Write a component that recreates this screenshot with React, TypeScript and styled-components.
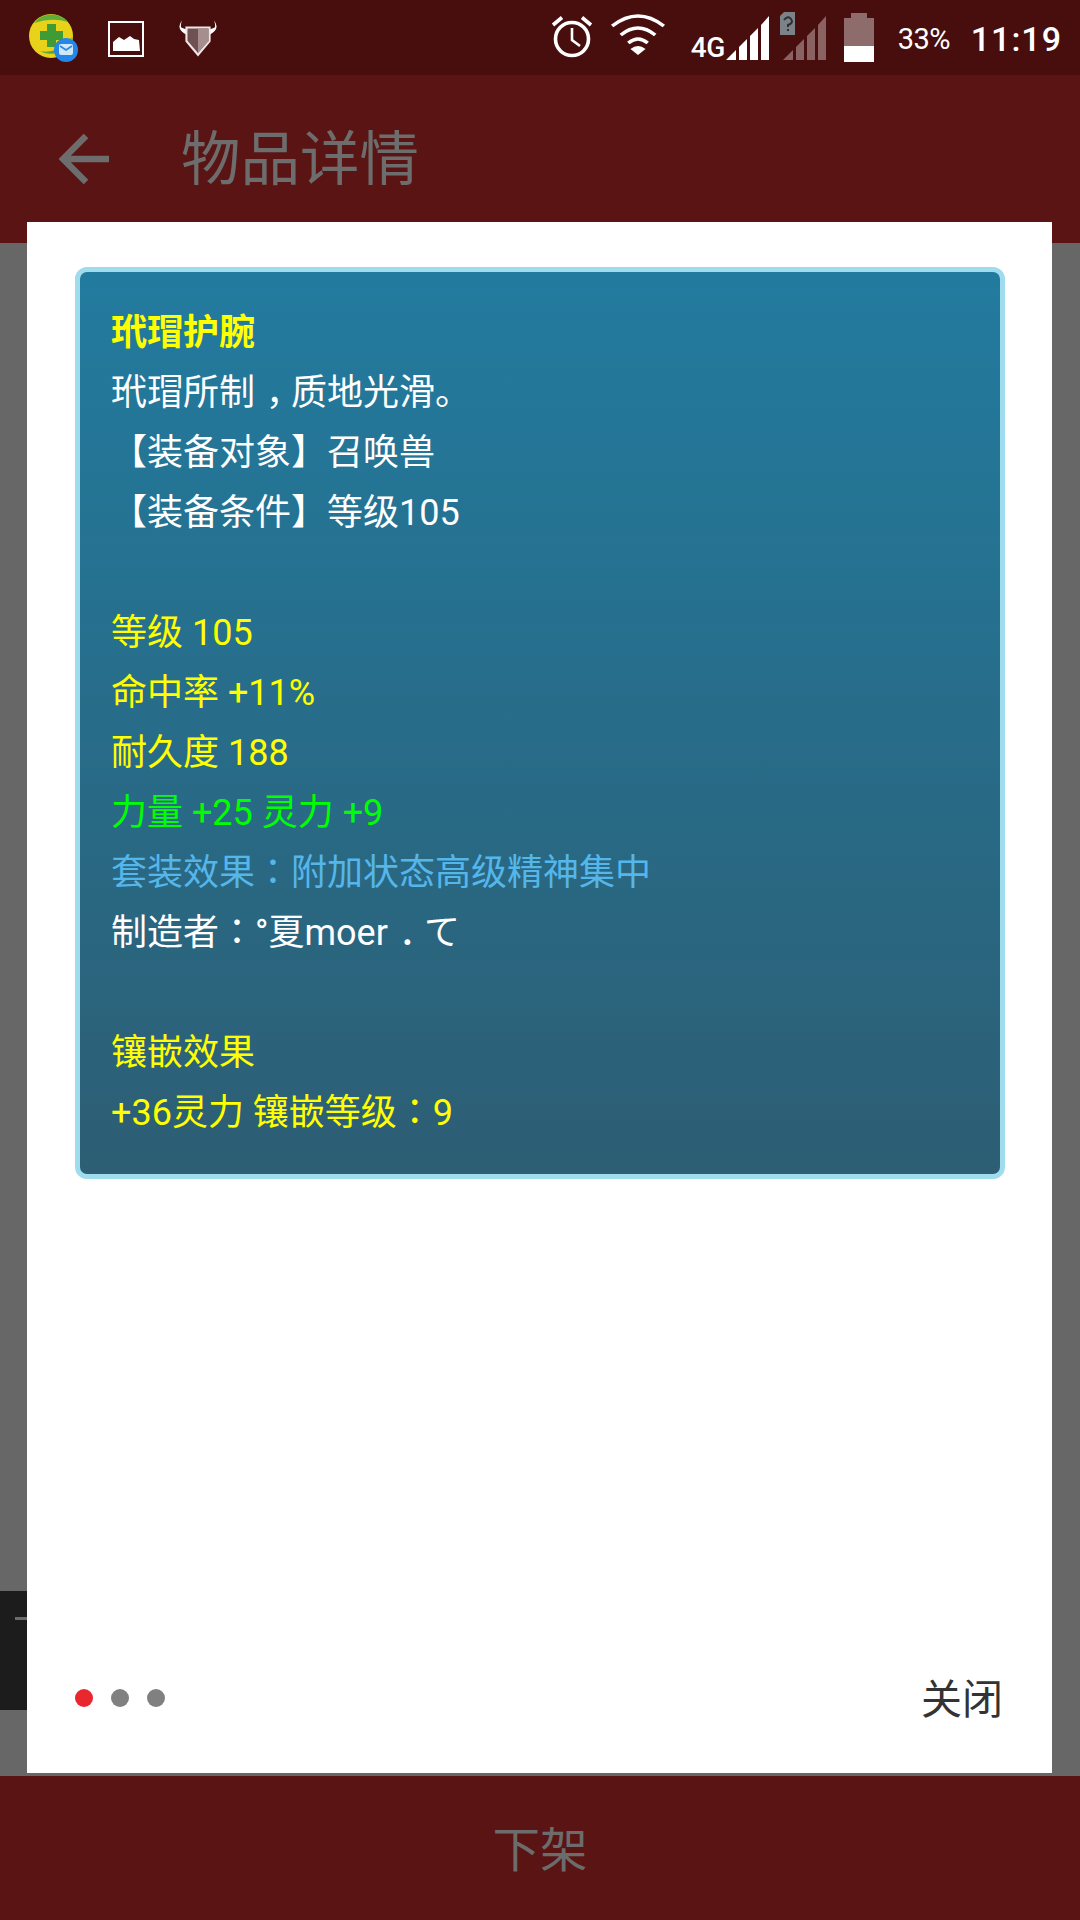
import React from "react";
import styled, { createGlobalStyle } from "styled-components";

const Global = createGlobalStyle`
  html, body { margin: 0; padding: 0; background: #676767; }
  * { box-sizing: border-box; }
`;
const FONT = `Roboto, "Noto Sans CJK SC", sans-serif`;

const Page = styled.div`
  position: relative;
  width: 1080px;
  height: 1920px;
  display: flex;
  flex-direction: column;
  font-family: ${FONT};
  overflow: hidden;
`;
const StatusBar = styled.div`
  height: 75px;
  background: #470e0d;
  display: flex;
  align-items: center;
  padding: 2px 18px 0 28px;
`;
const StatusLeft = styled.div`
  display: flex;
  align-items: center;
  gap: 28px;
  flex: 1;
`;
const StatusRight = styled.div`
  display: flex;
  align-items: center;
`;
const Battery = styled.span`
  font-size: 29px;
  color: #fff;
  margin-left: 24px;
  width: 53px;
  letter-spacing: -0.5px;
`;
const Clock = styled.span`
  font-size: 34px;
  font-weight: 500;
  color: #fff;
  margin-left: 20px;
  letter-spacing: 1px;
`;
const AppBar = styled.div`
  height: 168px;
  background: #5a1413;
  display: flex;
  align-items: center;
  padding: 0 0 0 59px;
  gap: 72px;
`;
const Title = styled.div`
  font-size: 59.5px;
  line-height: 1;
  padding-top: 4px;
  color: #6d6d6d;
`;
const Body = styled.div`
  flex: 1;
  background: #676767;
`;
const Toast = styled.div`
  position: absolute;
  left: 0;
  top: 1591px;
  width: 27px;
  height: 119px;
  background: #1c1c1c;
  &::after {
    content: "";
    position: absolute;
    left: 15px;
    right: 0;
    top: 26px;
    height: 3px;
    background: #6b6b6b;
  }
`;
const BottomBar = styled.div`
  height: 144px;
  background: #5a1413;
  display: flex;
  align-items: center;
  justify-content: center;
  font-size: 47.5px;
  line-height: 1;
  padding-top: 7px;
  color: #6c6c6c;
`;
const Dialog = styled.div`
  position: absolute;
  left: 27px;
  top: 222px;
  width: 1025px;
  height: 1551px;
  background: #fff;
  display: flex;
  flex-direction: column;
  padding: 45px 47px 0 48px;
`;
const Card = styled.div`
  border: 5px solid #9edcee;
  border-radius: 12px;
  background: linear-gradient(180deg, #227b9f 0%, #2d5e74 100%);
  padding: 31px 32px 31px 31px;
  font-size: 36px;
  line-height: 60px;
`;
const Line = styled.div<{ $c?: string; $b?: boolean }>`
  color: ${(p) => p.$c ?? "#fff"};
  font-weight: ${(p) => (p.$b ? 700 : 400)};
  height: 60px;
  white-space: pre;
`;
const Colon = styled.span`
  font-family: "Noto Sans CJK KR", sans-serif;
  line-height: 0;
`;
const Dotted = styled(Colon)`
  display: inline-block;
  padding-left: 0.3em;
  letter-spacing: -0.3em;
`;
const Footer = styled.div`
  margin-top: auto;
  height: 148px;
  display: flex;
  justify-content: space-between;
  align-items: flex-start;
`;
const Dots = styled.div`
  display: flex;
  gap: 18px;
  margin-top: 64px;
`;
const Dot = styled.span<{ $on?: boolean }>`
  width: 18px;
  height: 18px;
  border-radius: 50%;
  background: ${(p) => (p.$on ? "#e8272f" : "#808080")};
`;
const Close = styled.div`
  font-size: 41px;
  line-height: 60px;
  margin-top: 45px;
  color: #333;
  padding-right: 2px;
`;
const Icon = styled.svg<{ $ml?: number; $mb?: number }>`
  display: block;
  flex: none;
  margin-left: ${(p) => p.$ml ?? 0}px;
  margin-bottom: ${(p) => p.$mb ?? 0}px;
`;
const FourG = styled.span`
  font-size: 28px;
  font-weight: 500;
  color: #fff;
  margin: 18px 1px 0 25px;
  letter-spacing: -0.5px;
`;

const QQ = () => (
  <Icon width="52" height="52" viewBox="0 0 52 52">
    <circle cx="23" cy="23" r="22" fill="#e9d21a" />
    <path d="M6 10A22 22 0 0 1 40 9Q24 4 6 10Z" fill="#5fae3a" />
    <path d="M12 38Q28 42 44 24A22 22 0 0 1 12 38Z" fill="#58a53a" />
    <path d="M19 11h9v7h7v9h-7v7h-9v-7h-7v-9h7z" fill="#3f9b35" />
    <circle cx="38" cy="37" r="12" fill="#2486e6" />
    <rect x="31" y="31" width="14" height="11" rx="2" fill="#cfe6fb" />
    <path d="M32 33l6 4 6-4" fill="none" stroke="#2486e6" strokeWidth="1.6" />
  </Icon>
);
const Picture = () => (
  <Icon width="36" height="36" viewBox="0 0 36 36">
    <rect x="1" y="1" width="34" height="34" fill="none" stroke="#fff" strokeWidth="2" />
    <path d="M5 30V21l6-5 5 3 6-4 4 3 5 1 1 11z" fill="#fff" />
  </Icon>
);
const Shield = () => (
  <Icon $ml={5} $mb={2} width="42" height="38" viewBox="0 0 40 36">
    <path d="M5 1Q-2 9 9 15V10L4 8Q3 5 5 1ZM35 1Q42 9 31 15V10L36 8Q37 5 35 1Z" fill="#fff" />
    <path d="M9 8H31V21L20 34 9 21Z" fill="#6f5153" stroke="#f0e6e6" strokeWidth="2" />
    <path d="M20 9H30V21L20 32Z" fill="#a68d8e" />
  </Icon>
);
const Alarm = () => (
  <Icon $mb={6} width="42" height="44" viewBox="0 0 42 44">
    <circle cx="21" cy="25" r="16.5" fill="none" stroke="#fff" strokeWidth="3.6" />
    <path d="M21 14V26L29 32" fill="none" stroke="#fff" strokeWidth="2.6" />
    <path d="M2 11L11 3.5M40 11L31 3.5" stroke="#fff" strokeWidth="3.6" />
  </Icon>
);
const Wifi = () => (
  <Icon $ml={17} $mb={9} width="56" height="44" viewBox="0 0 52 44" preserveAspectRatio="none">
    <path d="M2 14Q26 -6 50 14M10 23Q26 9 42 23M17 31Q26 23 35 31" fill="none" stroke="#fff" strokeWidth="3.4" />
    <path d="M19 37Q26 31 33 37L26 43Z" fill="#fff" />
  </Icon>
);
const Signal = ({ dim }: { dim?: boolean }) => (
  <Icon $mb={4} width="44" height="46" viewBox="0 0 44 46">
    <g fill={dim ? "#8a6262" : "#fff"}>
      <path d="M0 46L10 36V46Z" />
      <path d="M13 33L21 25V46H13Z" />
      <path d="M24 22L32 14V46H24Z" />
      <path d="M35 11L43 2V46H35Z" />
    </g>
  </Icon>
);
const SimIcon = styled(Icon)`
  margin-bottom: 30px;
  margin-right: -13px;
`;
const Sim = () => (
  <SimIcon $ml={10} width="16" height="24" viewBox="0 0 16 24">
    <path d="M0 4L4 0H15V23H0Z" fill="#7d8288" />
    <path d="M4 8Q8 3 11 7T8 13V15M8 17V19" stroke="#2c2f33" strokeWidth="2" fill="none" />
  </SimIcon>
);
const Batt = () => (
  <Icon $ml={17} $mb={3} width="30" height="49" viewBox="0 0 30 49">
    <rect x="7" y="0" width="16" height="6" fill="#8f6c6c" />
    <rect x="0" y="5" width="30" height="28" fill="#8f6c6c" />
    <rect x="0" y="33" width="30" height="16" fill="#fff" />
  </Icon>
);
const Back = () => (
  <Icon width="50" height="50" viewBox="0 0 50 50">
    <path d="M50 25H4M27 2L4 25L27 48" fill="none" stroke="#6d6d6d" strokeWidth="6.5" />
  </Icon>
);

export default function App() {
  return (
    <Page>
      <Global />
      <StatusBar>
        <StatusLeft>
          <QQ />
          <Picture />
          <Shield />
        </StatusLeft>
        <StatusRight>
          <Alarm />
          <Wifi />
          <FourG>4G</FourG>
          <Signal />
          <Sim />
          <Signal dim />
          <Batt />
          <Battery>33%</Battery>
          <Clock>11:19</Clock>
        </StatusRight>
      </StatusBar>
      <AppBar>
        <Back />
        <Title>物品详情</Title>
      </AppBar>
      <Body />
      <BottomBar>下架</BottomBar>
      <Toast />
      <Dialog>
        <Card>
          <Line $c="#ffff00" $b>玳瑁护腕</Line>
          <Line>玳瑁所制<Dotted>，</Dotted>质地光滑。</Line>
          <Line>【装备对象】召唤兽</Line>
          <Line>【装备条件】等级105</Line>
          <Line> </Line>
          <Line $c="#ffff00">等级 105</Line>
          <Line $c="#ffff00">命中率 +11%</Line>
          <Line $c="#ffff00">耐久度 188</Line>
          <Line $c="#00ff00">力量 +25 灵力 +9</Line>
          <Line $c="#55b6ea">套装效果<Colon>：</Colon>附加状态高级精神集中</Line>
          <Line>制造者<Colon>：</Colon>°夏moer<Dotted>．</Dotted>て</Line>
          <Line> </Line>
          <Line $c="#ffff00">镶嵌效果</Line>
          <Line $c="#ffff00">+36灵力 镶嵌等级<Colon>：</Colon>9</Line>
        </Card>
        <Footer>
          <Dots>
            <Dot $on />
            <Dot />
            <Dot />
          </Dots>
          <Close>关闭</Close>
        </Footer>
      </Dialog>
    </Page>
  );
}
